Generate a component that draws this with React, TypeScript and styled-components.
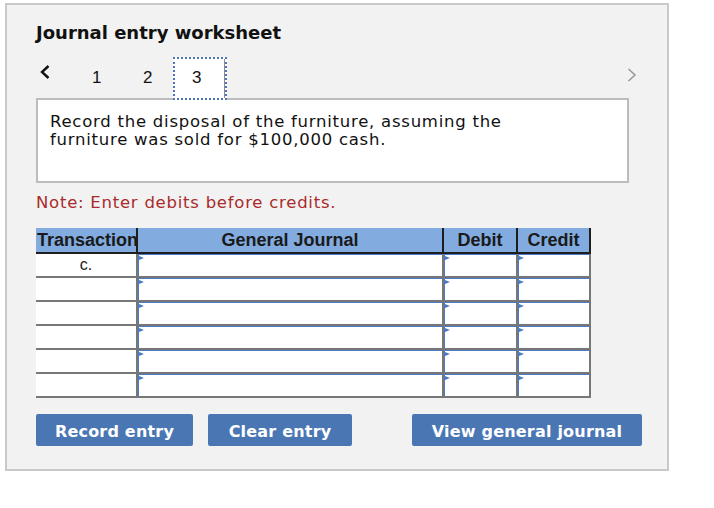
import React from "react";
import styled, { createGlobalStyle } from "styled-components";

const PANEL_BG = "#f2f2f2";
const PANEL_BORDER = "#c9c9c9";
const HEAD_BLUE = "#82abdf";
const BTN_BLUE = "#4a76b4";
const INPUT_BLUE = "#4a7bc4";
const GRID_GREY = "#777777";
const NOTE_RED = "#a92b2b";

const ROW_COUNT = 6;

const GlobalStyle = createGlobalStyle`
  body {
    margin: 0;
    background: #ffffff;
    font-family: "DejaVu Sans", Verdana, sans-serif;
  }
`;

function ChevronLeft() {
  return (
    <svg width="10" height="14" viewBox="0 0 10 14">
      <polyline points="8.5,1 2,7 8.5,13" fill="none" stroke="#111" strokeWidth="2.4" />
    </svg>
  );
}

function ChevronRight() {
  return (
    <svg width="10" height="14" viewBox="0 0 10 14">
      <polyline points="1.5,1 8,7 1.5,13" fill="none" stroke="#9a9a9a" strokeWidth="1.6" />
    </svg>
  );
}

function App() {
  const rows = Array.from({ length: ROW_COUNT }, (_, i) => i);

  return (
    <>
      <GlobalStyle />
      <Panel>
        <Title>Journal entry worksheet</Title>

        <NavRow>
          <PrevButton aria-label="previous">
            <ChevronLeft />
          </PrevButton>
          <PageTab>1</PageTab>
          <PageTab>2</PageTab>
          <PageTab active>3</PageTab>
          <NextButton aria-label="next">
            <ChevronRight />
          </NextButton>
        </NavRow>

        <QuestionBox>
          <QuestionText>
            Record the disposal of the furniture, assuming the furniture was sold for $100,000 cash.
          </QuestionText>
        </QuestionBox>

        <Note>Note: Enter debits before credits.</Note>

        <Grid>
          <HeadCell align="left">Transaction</HeadCell>
          <HeadCell>General Journal</HeadCell>
          <HeadCell>Debit</HeadCell>
          <HeadCell>Credit</HeadCell>

          {rows.map((r) => (
            <React.Fragment key={r}>
              <TransCell>{r === 0 ? "c." : ""}</TransCell>
              <InputCell>
                <CellInput />
              </InputCell>
              <InputCell>
                <CellInput />
              </InputCell>
              <InputCell>
                <CellInput />
              </InputCell>
            </React.Fragment>
          ))}
        </Grid>

        <ButtonRow>
          <ActionButton w={157}>Record entry</ActionButton>
          <ActionButton w={144}>Clear entry</ActionButton>
          <ActionButton w={230} push>
            View general journal
          </ActionButton>
        </ButtonRow>
      </Panel>
    </>
  );
}

export default App;

const Panel = styled.div`
  box-sizing: border-box;
  width: 664px;
  height: 468px;
  margin: 3px 0 0 5px;
  padding: 17px 0 0 29px;
  border: 2px solid ${PANEL_BORDER};
  background: ${PANEL_BG};
`;
const Title = styled.h1`
  margin: 0;
  font-size: 18px;
  line-height: 22px;
  font-weight: bold;
  color: #111;
`;
const NavRow = styled.div`
  display: flex;
  align-items: center;
  width: 601px;
  height: 43px;
  margin-top: 13px;
`;
const PrevButton = styled.button`
  display: flex;
  width: 36px;
  padding: 0 0 0 4px;
  margin-bottom: 14px;
  border: none;
  background: transparent;
`;
const NextButton = styled.button`
  display: flex;
  margin: 0 0 7px auto;
  padding: 0;
  border: none;
  background: transparent;
`;
const PageTab = styled.button<{ active?: boolean }>`
  position: relative;
  z-index: 1;
  box-sizing: border-box;
  width: ${(p) => (p.active ? "54px" : "51px")};
  height: 43px;
  margin-left: ${(p) => (p.active ? "-1px" : "0")};
  padding: 0 0 2px ${(p) => (p.active ? "17px" : "20px")};
  text-align: left;
  font-family: "Liberation Sans", Arial, sans-serif;
  font-size: 17px;
  color: #111;
  border: ${(p) => (p.active ? "2px dotted #4d75b8" : "none")};
  background: ${(p) => (p.active ? "#fff" : "transparent")};
  box-shadow: ${(p) => (p.active ? "inset -1px 0 0 #8c8c8c" : "none")};
`;
const QuestionBox = styled.div`
  box-sizing: border-box;
  width: 593px;
  height: 85px;
  margin-top: -2px;
  padding: 13px 12px;
  border: 2px solid #bcbcbc;
  background: #fff;
`;
const QuestionText = styled.p`
  max-width: 520px;
  margin: 0;
  font-size: 16.5px;
  letter-spacing: 0.75px;
  line-height: 17.5px;
  color: #111;
`;
const Note = styled.p`
  margin: 10px 0 0;
  font-size: 16.5px;
  letter-spacing: 0.75px;
  line-height: 20px;
  color: ${NOTE_RED};
`;
const Grid = styled.div`
  display: grid;
  grid-template-columns: 102px 306px 74px 73px;
  width: 555px;
  margin-top: 15px;
`;
const HeadCell = styled.div<{ align?: "left" | "center" }>`
  box-sizing: border-box;
  height: 26px;
  padding-left: ${(p) => (p.align === "left" ? "1px" : "0")};
  overflow: hidden;
  white-space: nowrap;
  text-align: ${(p) => p.align || "center"};
  font-family: "Liberation Sans", Arial, sans-serif;
  font-size: 18px;
  font-weight: bold;
  line-height: 24px;
  color: #1a1a1a;
  background: ${HEAD_BLUE};
  border-right: 2px solid #1e1e1e;
  border-bottom: 2px solid #1e1e1e;
`;
const TransCell = styled.div`
  box-sizing: border-box;
  height: 24px;
  text-align: center;
  font-family: "Liberation Sans", Arial, sans-serif;
  font-size: 16px;
  line-height: 22px;
  color: #222;
  background: #fff;
  border-right: 2px solid ${GRID_GREY};
  border-bottom: 2px solid ${GRID_GREY};
`;
const InputCell = styled.div`
  position: relative;
  box-sizing: border-box;
  height: 24px;
  background: #fff;
  border-right: 2px solid ${GRID_GREY};
  border-bottom: 2px solid ${GRID_GREY};

  &::before {
    content: "";
    position: absolute;
    top: 2px;
    left: 1px;
    border-left: 5px solid ${INPUT_BLUE};
    border-top: 2px solid transparent;
    border-bottom: 2px solid transparent;
  }
`;
const CellInput = styled.input`
  display: block;
  box-sizing: border-box;
  width: 100%;
  height: 100%;
  margin: 0;
  padding: 0 4px;
  border: none;
  border-top: 1px solid ${INPUT_BLUE};
  border-left: 1px solid ${INPUT_BLUE};
  background: transparent;
  outline: none;
`;
const ButtonRow = styled.div`
  display: flex;
  gap: 15px;
  margin-top: 16px;
`;
const ActionButton = styled.button<{ w: number; push?: boolean }>`
  width: ${(p) => p.w}px;
  height: 32px;
  margin-left: ${(p) => (p.push ? "45px" : "0")};
  padding: 3px 0 0;
  border: none;
  border-radius: 2px;
  background: ${BTN_BLUE};
  color: #fff;
  font-family: "DejaVu Sans", Verdana, sans-serif;
  font-size: 16px;
  letter-spacing: 0.2px;
  font-weight: bold;
`;
